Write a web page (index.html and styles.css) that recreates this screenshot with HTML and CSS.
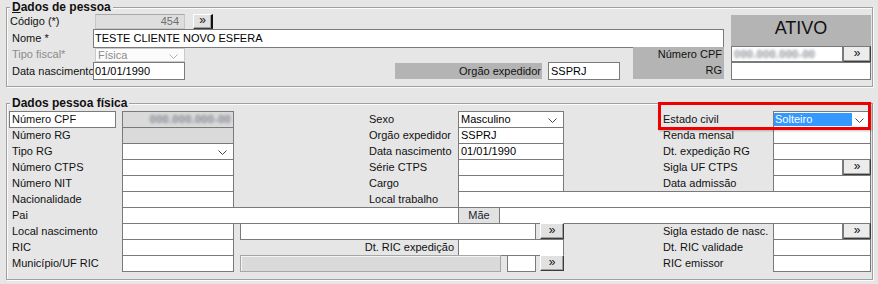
FILE: index.html
```html
<!DOCTYPE html>
<html lang="pt">
<head>
<meta charset="utf-8">
<title>Dados de pessoa</title>
<link rel="stylesheet" href="styles.css">
</head>
<body>
<div class="group g1">
  <span class="legend"><u>D</u>ados de pessoa</span>
  <div class="grid1">
    <span class="lbl g1-cod-l">Código (*)</span>
    <div class="fld dis g1-cod">454</div>
    <div class="btn g1-codb">»</div>
    <div class="ativo">ATIVO</div>
    <span class="lbl g1-nome-l">Nome *</span>
    <div class="fld g1-nome">TESTE CLIENTE NOVO ESFERA</div>
    <span class="lbl off g1-tipo-l">Tipo fiscal*</span>
    <div class="fld sel dsel g1-tipo"><span>Física</span><svg class="chev" width="9" height="5" viewBox="0 0 9 5"><polyline points="0.5,0.5 4.5,4.5 8.5,0.5" fill="none" stroke="#b0b0b0" stroke-width="1"/></svg></div>
    <div class="graylbl g1-cpfrg"><span class="gl-row1">Número CPF</span><span class="gl-row2">RG</span></div>
    <div class="fld g1-cpf"><span class="blur">000.000.000-00</span></div>
    <div class="btn g1-cpfb">»</div>
    <span class="lbl g1-dn-l">Data nascimento</span>
    <div class="fld g1-dn">01/01/1990</div>
    <div class="graylbl g1-org">Orgão expedidor</div>
    <div class="fld g1-ssprj">SSPRJ</div>
    <div class="fld g1-rg"></div>
  </div>
</div>

<div class="group g2">
  <span class="legend">Dados pessoa física</span>
  <div class="mark"></div>
  <div class="grid2">
    <!-- row 1 -->
    <div class="lblbox r1">Número CPF</div>
    <div class="fld dis2 right r1 cf"><span class="blur">000.000.000-00</span></div>
    <span class="lbl r1 cm">Sexo</span>
    <div class="fld sel r1 cmf"><span>Masculino</span><svg class="chev" width="9" height="5" viewBox="0 0 9 5"><polyline points="0.5,0.5 4.5,4.5 8.5,0.5" fill="none" stroke="#444" stroke-width="1"/></svg></div>
    <span class="lbl r1 cr">Estado civil</span>
    <div class="fld sel r1 crf"><span class="hl">Solteiro</span><svg class="chev" width="9" height="5" viewBox="0 0 9 5"><polyline points="0.5,0.5 4.5,4.5 8.5,0.5" fill="none" stroke="#444" stroke-width="1"/></svg></div>
    <!-- row 2 -->
    <span class="lbl r2 cl">Número RG</span>
    <div class="fld dis2 r2 cf"></div>
    <span class="lbl r2 cm">Orgão expedidor</span>
    <div class="fld r2 cmf">SSPRJ</div>
    <span class="lbl r2 cr">Renda mensal</span>
    <div class="fld r2 crf"></div>
    <!-- row 3 -->
    <span class="lbl r3 cl">Tipo RG</span>
    <div class="fld sel r3 cf"><span></span><svg class="chev" width="9" height="5" viewBox="0 0 9 5"><polyline points="0.5,0.5 4.5,4.5 8.5,0.5" fill="none" stroke="#444" stroke-width="1"/></svg></div>
    <span class="lbl r3 cm">Data nascimento</span>
    <div class="fld r3 cmf">01/01/1990</div>
    <span class="lbl r3 cr">Dt. expedição RG</span>
    <div class="fld r3 crf"></div>
    <!-- row 4 -->
    <span class="lbl r4 cl">Número CTPS</span>
    <div class="fld r4 cf"></div>
    <span class="lbl r4 cm">Série CTPS</span>
    <div class="fld r4 cmf"></div>
    <span class="lbl r4 cr">Sigla UF CTPS</span>
    <div class="fld r4 crs"></div>
    <div class="btn r4 crb">»</div>
    <!-- row 5 -->
    <span class="lbl r5 cl">Número NIT</span>
    <div class="fld r5 cf"></div>
    <span class="lbl r5 cm">Cargo</span>
    <div class="fld r5 cmf"></div>
    <span class="lbl r5 cr">Data admissão</span>
    <div class="fld r5 crf"></div>
    <!-- row 6 -->
    <span class="lbl r6 cl">Nacionalidade</span>
    <div class="fld r6 cf"></div>
    <span class="lbl r6 cm">Local trabalho</span>
    <div class="fld r6 clt"></div>
    <!-- row 7 -->
    <span class="lbl r7 cl">Pai</span>
    <div class="fld r7 cpai x1"></div>
    <div class="maebox r7 cmae x1">Mãe</div>
    <div class="fld r7 cmaef"></div>
    <!-- row 8 -->
    <span class="lbl r8 cl">Local nascimento</span>
    <div class="fld r8 cf"></div>
    <div class="fld r8 cwide"></div>
    <div class="btn r8 cbtn">»</div>
    <span class="lbl r8 cr">Sigla estado de nasc.</span>
    <div class="fld r8 crs"></div>
    <div class="btn r8 crb">»</div>
    <!-- row 9 -->
    <span class="lbl r9 cl">RIC</span>
    <div class="fld r9 cf"></div>
    <span class="lbl right r9 cric">Dt. RIC expedição</span>
    <div class="fld r9 cmf"></div>
    <span class="lbl r9 cr">Dt. RIC validade</span>
    <div class="fld r9 crf"></div>
    <!-- row 10 -->
    <span class="lbl r10 cl">Município/UF RIC</span>
    <div class="fld r10 cf"></div>
    <div class="fld dis3 r10 cmun x2"></div>
    <div class="fld r10 csmall"></div>
    <div class="btn r10 cbtn">»</div>
    <span class="lbl r10 cr">RIC emissor</span>
    <div class="fld r10 crf"></div>
  </div>
</div>
</body>
</html>
```

FILE: styles.css
```css
html, body {
  margin: 0;
  padding: 0;
}
body {
  width: 878px;
  height: 284px;
  overflow: hidden;
  background: #e6e6e6;
  font-family: "Liberation Sans", Arial, sans-serif;
  font-size: 11px;
  color: #000;
}

/* group boxes */
.group {
  position: relative;
  box-sizing: border-box;
  margin-left: 6px;
  width: 867px;
  border: 1px solid #a0a0a0;
  box-shadow: inset 1px 1px 0 #fbfbfb, 1px 1px 0 #fbfbfb;
}
.g1 {
  margin-top: 7px;
  height: 80px;
  padding: 6px 0 0 3px;
}
.g2 {
  margin-top: 16px;
  height: 177px;
  padding: 7px 0 0 2px;
}
.legend {
  position: absolute;
  top: -8px;
  left: 3px;
  padding: 0 2px;
  background: #e6e6e6;
  font-weight: bold;
  font-size: 12px;
  line-height: 14px;
  color: #111;
}
.legend u {
  text-decoration-thickness: 1px;
  text-underline-offset: 1px;
}

/* generic controls */
.lbl {
  white-space: nowrap;
  line-height: 13px;
  align-self: center;
  color: #111;
}
.off {
  color: #8c8c8c;
}
.right {
  text-align: right;
  justify-content: flex-end;
}
.fld {
  box-sizing: border-box;
  background: #fff;
  border: 1px solid #7a7a7a;
  height: 17px;
  line-height: 15px;
  padding: 0 2px;
  white-space: nowrap;
  overflow: hidden;
  align-self: start;
}
.sel {
  display: flex;
  align-items: center;
  justify-content: space-between;
}
.chev {
  flex: none;
  margin-right: 4px;
  margin-top: 1px;
}
.btn {
  box-sizing: border-box;
  align-self: start;
  height: 16px;
  background: #e1e1e1;
  border-top: 1px solid #fff;
  border-left: 1px solid #fff;
  border-right: 1px solid #3c3c3c;
  border-bottom: 1px solid #3c3c3c;
  box-shadow: inset -1px -1px 0 #a0a0a0;
  text-align: center;
  font-size: 12px;
  line-height: 12px;
  color: #111;
}
.blur {
  color: #5f6670;
  font-weight: bold;
  filter: blur(1.4px);
  letter-spacing: 0.3px;
  opacity: 0.75;
}
.graylbl {
  background: #b4b4b4;
  color: #111;
  white-space: nowrap;
}

/* ---------- group 1 ---------- */
.grid1 {
  display: grid;
  grid-template-columns: 83px 92px 210px 147px 6px 72px 13px 91px 7px 112px 28px;
  grid-template-rows: 15px 18px 15px 18px;
}
.g1-cod-l { grid-column: 1; grid-row: 1; }
.g1-cod {
  grid-column: 2; grid-row: 1;
  margin-left: 2px;
  height: 15px;
  line-height: 13px;
  text-align: right;
  padding-right: 5px;
  background: #dedede;
  border-color: #c6c6c6;
  border-top-color: #a9a9a9;
  color: #6e6e6e;
}
.g1-codb {
  grid-column: 3; grid-row: 1;
  justify-self: start;
  margin-left: 8px;
  width: 20px;
  height: 15px;
  border-right: 2px solid #111;
  line-height: 11px;
}
.ativo {
  grid-column: 10 / 12; grid-row: 1 / 3;
  margin-top: 1px;
  height: 31px;
  box-sizing: border-box;
  padding-top: 4px;
  background: #b4b4b4;
  text-align: center;
  font-size: 18px;
  line-height: 18px;
  color: #111;
}
.g1-nome-l { grid-column: 1; grid-row: 2; padding-left: 2px; }
.g1-nome {
  grid-column: 2 / 9; grid-row: 2;
  height: 19px;
  line-height: 17px;
  padding-left: 1px;
}
.g1-tipo-l { grid-column: 1; grid-row: 3; padding-left: 2px; }
.g1-tipo {
  grid-column: 2; grid-row: 3;
  margin-left: 2px;
  margin-top: 1px;
  height: 14px;
  line-height: 12px;
  background: #fbfbfb;
  border-color: #cacaca;
  color: #8c8c8c;
}
.g1-tipo .chev { margin-top: 3px; }
.g1-cpfrg {
  grid-column: 8; grid-row: 3 / 5;
  height: 32px;
  display: flex;
  flex-direction: column;
  align-items: flex-end;
  padding-right: 2px;
}
.gl-row1 { height: 15px; line-height: 15px; }
.gl-row2 { height: 17px; line-height: 17px; }
.g1-cpf {
  grid-column: 10; grid-row: 3;
  margin-top: -1px;
  height: 16px;
  line-height: 14px;
}
.g1-cpfb {
  grid-column: 11; grid-row: 3;
  margin-top: -1px;
  height: 16px;
  line-height: 13px;
  border-left-color: #7a7a7a;
  border-top-color: #7a7a7a;
  background: #ececec;
}
.g1-dn-l { grid-column: 1; grid-row: 4; padding-left: 2px; }
.g1-dn {
  grid-column: 2; grid-row: 4;
  height: 18px;
  line-height: 16px;
  padding-left: 1px;
}
.g1-org {
  grid-column: 4; grid-row: 4;
  margin-top: 1px;
  height: 16px;
  line-height: 16px;
  text-align: right;
  padding-right: 1px;
}
.g1-ssprj {
  grid-column: 6; grid-row: 4;
  height: 18px;
  line-height: 16px;
  padding-left: 2px;
}
.g1-rg {
  grid-column: 10 / 12; grid-row: 4;
  height: 18px;
}

/* ---------- group 2 ---------- */
.grid2 {
  display: grid;
  grid-template-columns: 113px 112px 6px 129px 89px 41px 8px 29px 4px 24px 99px 110px 70px 28px;
  grid-template-rows: repeat(10, 16px);
}
.grid2 .lbl {
  align-self: start;
  line-height: 17px;
  height: 17px;
}
.r1 { grid-row: 1; }
.r2 { grid-row: 2; }
.r3 { grid-row: 3; }
.r4 { grid-row: 4; }
.r5 { grid-row: 5; }
.r6 { grid-row: 6; }
.r7 { grid-row: 7; }
.r8 { grid-row: 8; }
.r9 { grid-row: 9; }
.r10 { grid-row: 10; }

.cl { grid-column: 1; padding-left: 3px; }
.cf { grid-column: 2; }
.cm { grid-column: 5; }
.cmf { grid-column: 6 / 11; }
.cr { grid-column: 12; }
.crf { grid-column: 13 / 15; }
.crs { grid-column: 13; }
.crb { grid-column: 14; }
.clt { grid-column: 6 / 15; }
.cpai { grid-column: 2 / 6; }
.cmae { grid-column: 6; }
.cmaef { grid-column: 7 / 15; }
.cwide { grid-column: 4 / 9; }
.cbtn { grid-column: 10; }
.cric { grid-column: 4 / 6; padding-right: 4px; }
.cmun { grid-column: 4 / 7; }
.csmall { grid-column: 8; }

.x1 { width: calc(100% + 1px); }
.x2 { width: calc(100% + 2px); }

.lblbox {
  grid-column: 1;
  box-sizing: border-box;
  align-self: start;
  width: 107px;
  height: 17px;
  line-height: 15px;
  padding-left: 2px;
  background: #fff;
  border: 1px solid #7a7a7a;
  color: #111;
  white-space: nowrap;
}
.dis2 {
  background: #dadada;
  display: flex;
  align-items: center;
}
.dis3 {
  background: #dadada;
  border-color: #a6a6a6;
  box-shadow: inset 1px 1px 0 #f4f4f4;
}
.crb {
  height: 16px;
  line-height: 13px;
  border-left-color: #7a7a7a;
  border-top-color: #7a7a7a;
  background: #ececec;
}
.cbtn {
  line-height: 13px;
}
.maebox {
  box-sizing: border-box;
  align-self: start;
  height: 17px;
  line-height: 15px;
  border: 1px solid #7a7a7a;
  background: #e2e2e2;
  text-align: center;
  color: #1c2430;
}
.hl {
  display: inline-block;
  width: 77px;
  height: 13px;
  line-height: 13px;
  margin-left: -1px;
  padding-left: 1px;
  background: #3399ff;
  color: #fff;
}
.crf.sel {
  padding-left: 1px;
}

/* red highlight annotation over the Estado civil row */
.mark {
  position: absolute;
  left: 651px;
  top: -2px;
  width: 213px;
  height: 28px;
  box-sizing: border-box;
  border: 3px solid #ee0000;
  box-shadow: 1px 1px 2px rgba(0, 0, 0, 0.25);
  pointer-events: none;
  z-index: 2;
}
```
